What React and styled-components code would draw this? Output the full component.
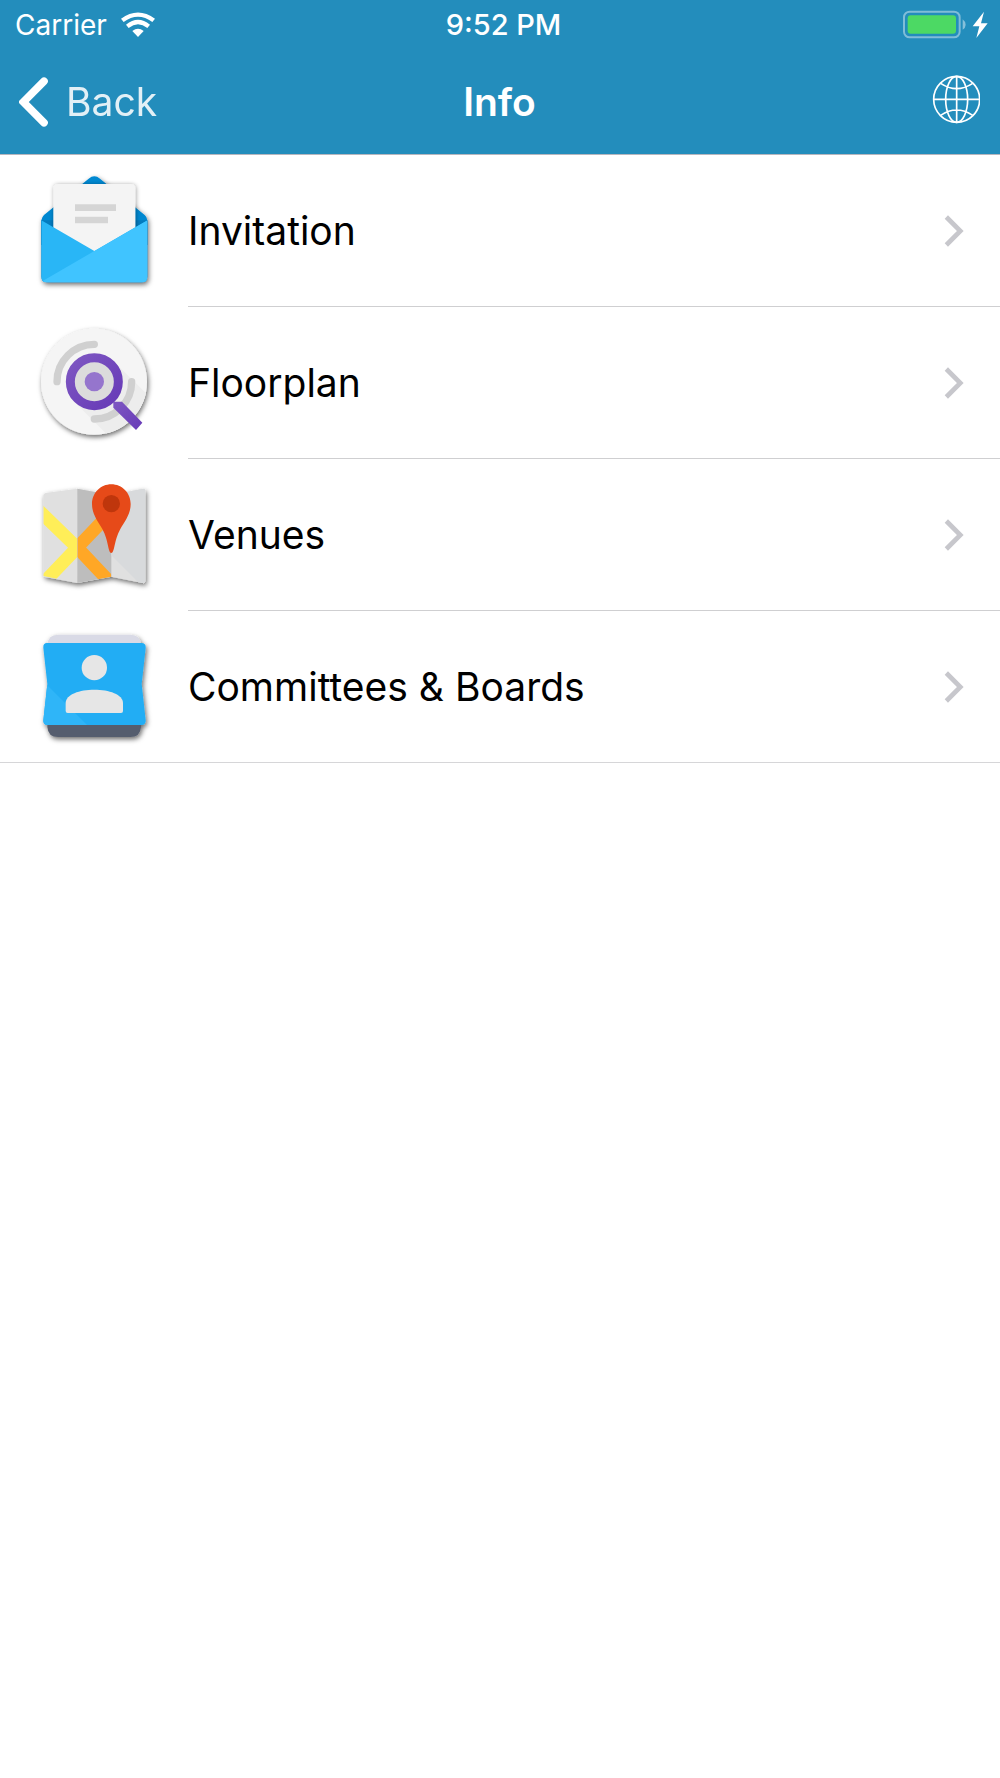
import React from "react";
import styled, { createGlobalStyle } from "styled-components";

const GlobalStyle = createGlobalStyle`
  *, *::before, *::after { box-sizing: border-box; }
  body {
    margin: 0;
    background: #fff;
    color: #000;
    font-family: Inter, "Liberation Sans", sans-serif;
  }
`;

const Header = styled.header`
  background: #238dbc;
  color: #fff;
  border-bottom: 1px solid #b6b6be;
`;

const ThreeColumns = styled.div`
  display: grid;
  grid-template-columns: 1fr auto 1fr;
  align-items: center;
`;

const StatusBar = styled(ThreeColumns)`
  height: 50px;
  padding: 0 8px 0 15px;
  font-size: 28px;
  line-height: 50px;
`;

const NavBar = styled(ThreeColumns)`
  height: 104px;
  padding: 0 20px 0 19px;
`;

const Side = styled.div`
  display: flex;
  align-items: center;
  justify-content: ${(p) => (p.$end ? "flex-end" : "flex-start")};
  gap: 14px;
`;

const Clock = styled.time`
  font-size: 29px;
  font-weight: 500;
`;

const Title = styled.h1`
  margin: 0;
  font-size: 39px;
  line-height: 48px;
  font-weight: 600;
`;

const BarButton = styled.button`
  display: flex;
  align-items: center;
  gap: 17px;
  margin: 0;
  padding: 0;
  border: 0;
  background: none;
  color: #fff;
  font: inherit;
  font-size: 39px;
  line-height: 48px;
  cursor: pointer;
`;

const BackText = styled.span`
  opacity: 0.87;
`;

const List = styled.ul`
  margin: 0;
  padding: 0;
  list-style: none;
  border-bottom: 1px solid #d6d6d8;
`;

const RowLink = styled.a`
  display: flex;
  align-items: flex-start;
  gap: 28px;
  padding-left: 30px;
  color: inherit;
  text-decoration: none;
`;

const RowBody = styled.span`
  display: flex;
  flex: 1;
  align-items: center;
  justify-content: space-between;
  height: ${(p) => (p.$last ? "151px" : "152px")};
  padding-right: 36px;
  border-bottom: ${(p) => (p.$last ? "0" : "1px solid #cfcfd1")};
`;

const RowLabel = styled.span`
  font-size: 39px;
  line-height: 48px;
`;

const RowIcon = styled.svg`
  flex: none;
  width: 130px;
  height: 130px;
  margin-top: 10px;
`;

const Wifi = () => (
  <svg width="34" height="26" viewBox="0 0 102 78" aria-hidden="true">
    <path d="M0 20Q51 -17 102 20L94 30Q51 -2 8 30Z" fill="#fff" />
    <path d="M15 38Q51 8 87 38L79 48Q51 26 23 48Z" fill="#fff" />
    <path d="M34 57Q51 43 68 57L51 75Z" fill="#fff" />
  </svg>
);

const Battery = () => (
  <svg width="89" height="30" viewBox="0 6 267 90" aria-label="Battery charging" role="img">
    <rect x="3" y="11" width="167" height="77" rx="17" fill="none" stroke="#fff" strokeOpacity=".42" strokeWidth="6" />
    <rect x="14" y="22" width="145" height="55" rx="9" fill="#4cd964" />
    <path d="M179 34q9 7 9 16t-9 15z" fill="#fff" fillOpacity=".45" />
    <path d="M243 11 L209 55 H229 L220 90 L254 46 H234Z" fill="#fff" />
  </svg>
);

const BackArrow = () => (
  <svg width="30" height="50" viewBox="0 0 90 150" aria-hidden="true">
    <path d="M75 13 L13 75 L75 137" fill="none" stroke="#fff" strokeWidth="23" strokeLinecap="round" />
  </svg>
);

const Globe = () => (
  <svg width="48" height="54" viewBox="-1 -1 144 162" aria-hidden="true">
    <g fill="none" stroke="#fff" strokeWidth="5">
      <circle cx="73" cy="72" r="69" />
      <ellipse cx="73" cy="72" rx="33" ry="69" />
      <path d="M73 3V141M4 72H142M25 24Q73 56 121 24M25 120Q73 88 121 120" />
    </g>
  </svg>
);

const Chevron = () => (
  <svg width="20" height="32" viewBox="-1 0 60 96" aria-hidden="true">
    <path d="M6 6 L48 48 L6 90" fill="none" stroke="#c7c7cc" strokeWidth="14" />
  </svg>
);

const Shadow = ({ id }) => (
  <filter id={id} x="-20%" y="-20%" width="140%" height="140%">
    <feDropShadow dx="4" dy="7" stdDeviation="8" floodColor="#000" floodOpacity=".58" />
  </filter>
);

const InvitationIcon = () => (
  <RowIcon viewBox="0 0 390 390" aria-hidden="true">
    <defs>
      <Shadow id="mailShadow" />
      <filter id="paperShadow" x="-15%" y="-15%" width="130%" height="130%">
        <feDropShadow dx="2" dy="2" stdDeviation="6" floodColor="#000" floodOpacity=".4" />
      </filter>
      <clipPath id="mailBody">
        <path d="M34 166 L193 258 L352 166V335Q352 352 335 352H51Q34 352 34 335Z" />
      </clipPath>
    </defs>
    <g filter="url(#mailShadow)">
      <path d="M34 335V166Q35 157 42 150L176 41Q193 27 210 41L344 150Q352 157 352 166V335Q352 352 335 352H51Q34 352 34 335Z" fill="#0288d1" />
    </g>
    <path d="M34 166H352V240H34Z" fill="#027bbf" />
    <path d="M70 270V71Q70 57 84 57H302Q316 57 316 71V270Z" fill="#f4f4f4" filter="url(#paperShadow)" />
    <path d="M135 118H258V138H135ZM135 155H234V175H135Z" fill="#d5d5d5" />
    <g clipPath="url(#mailBody)">
      <path d="M30 160H356V356H30Z" fill="#29b6f6" />
      <path d="M38 348 L193 258 L352 166V356H38Z" fill="#40c4ff" />
    </g>
  </RowIcon>
);

const FloorplanIcon = () => (
  <RowIcon viewBox="0 6 390 390" aria-hidden="true">
    <defs>
      <Shadow id="discShadow" />
      <clipPath id="disc"><circle cx="192" cy="200" r="160" /></clipPath>
      <linearGradient id="purple" x1="0" y1="0" x2="1" y2="1">
        <stop offset="0" stopColor="#7e57c2" />
        <stop offset="1" stopColor="#673ab7" />
      </linearGradient>
    </defs>
    <circle cx="192" cy="200" r="159" fill="#f5f5f5" filter="url(#discShadow)" />
    <g clipPath="url(#disc)">
      <path d="M133 260L253 140L390 277V397H270Z" fill="#ededed" />
      <g fill="none" stroke="#d0d0d0" strokeWidth="22" strokeLinecap="round">
        <path d="M81 200A112 112 0 0 1 193 88" />
        <path d="M305 200A112 112 0 0 1 193 312" />
      </g>
    </g>
    <path d="M250 260H276L337 323L318 345L250 278Z" fill="url(#purple)" />
    <circle cx="193" cy="200" r="72" fill="#dcdcdc" stroke="url(#purple)" strokeWidth="27" />
    <circle cx="193" cy="200" r="29" fill="#9575cd" />
  </RowIcon>
);

const VenuesIcon = () => (
  <RowIcon viewBox="0 -3 390 390" aria-hidden="true">
    <defs>
      <Shadow id="mapShadow" />
      <clipPath id="foldLeft"><path d="M40 71L142 56V339L40 318Z" /></clipPath>
      <clipPath id="foldMiddle"><path d="M142 56L244 75V320L142 339Z" /></clipPath>
    </defs>
    <path d="M40 76Q40 71 47 69L142 56L244 74L340 56Q346 56 346 61V333Q346 341 338 339L244 320L142 339L46 321Q40 320 40 314Z" fill="#e0e0e0" filter="url(#mapShadow)" />
    <path d="M142 56L244 75V320L142 339Z" fill="#bdbdbd" />
    <path d="M244 75L340 56Q346 56 346 61V333Q346 341 338 339L324 336L244 256Z" fill="#d8dadc" />
    <g fill="none" strokeWidth="39">
      <g clipPath="url(#foldLeft)" stroke="#ffee58">
        <path d="M20 115L154 245M20 360L154 220" />
      </g>
      <g clipPath="url(#foldMiddle)" stroke="#ffa726">
        <path d="M128 247L238 132M128 218L258 356" />
      </g>
    </g>
    <path d="M244 43C276 43 302 69 302 102C302 132 286 151 271 177C252 211 254 249 244 249C234 249 236 211 217 177C202 151 186 132 186 102C186 69 212 43 244 43Z" fill="#e64a19" />
    <circle cx="244" cy="101" r="26" fill="#bf360c" />
  </RowIcon>
);

const CommitteesIcon = () => (
  <RowIcon viewBox="0 3 390 390" aria-hidden="true">
    <defs>
      <Shadow id="contactShadow" />
      <clipPath id="card">
        <path d="M51 69H334Q348 69 347 83L335 192L347 301Q348 315 334 315H53Q39 315 40 301L52 192L40 83Q39 69 51 69Z" />
      </clipPath>
    </defs>
    <g filter="url(#contactShadow)">
      <path d="M52 75Q54 44 84 44H301Q331 44 333 75V315H52Z" fill="#d9dae6" />
      <path d="M52 310H333V321Q331 351 301 351H84Q54 351 52 321Z" fill="#555d6e" />
      <path d="M51 69H334Q348 69 347 83L335 192L347 301Q348 315 334 315H53Q39 315 40 301L52 192L40 83Q39 69 51 69Z" fill="#20adf4" />
    </g>
    <path clipPath="url(#card)" d="M30 174L176 320H30Z" fill="#2fb5f8" />
    <circle cx="193" cy="143" r="38" fill="#e6e6e6" />
    <path d="M107 249C107 223 149 209 193 209C237 209 279 223 279 249V273Q279 279 273 279H113Q107 279 107 273Z" fill="#e6e6e6" />
  </RowIcon>
);

const entries = [
  { label: "Invitation", href: "#invitation", Icon: InvitationIcon },
  { label: "Floorplan", href: "#floorplan", Icon: FloorplanIcon },
  { label: "Venues", href: "#venues", Icon: VenuesIcon },
  { label: "Committees & Boards", href: "#committees", Icon: CommitteesIcon },
];

export default function App() {
  return (
    <>
      <GlobalStyle />
      <Header>
        <StatusBar>
          <Side>
            <span>Carrier</span>
            <Wifi />
          </Side>
          <Clock>9:52 PM</Clock>
          <Side $end>
            <Battery />
          </Side>
        </StatusBar>
        <NavBar>
          <Side>
            <BarButton type="button">
              <BackArrow />
              <BackText>Back</BackText>
            </BarButton>
          </Side>
          <Title>Info</Title>
          <Side $end>
            <BarButton type="button" aria-label="Language">
              <Globe />
            </BarButton>
          </Side>
        </NavBar>
      </Header>
      <main>
        <List>
          {entries.map(({ label, href, Icon }, index) => (
            <li key={label}>
              <RowLink href={href}>
                <Icon />
                <RowBody $last={index === entries.length - 1}>
                  <RowLabel>{label}</RowLabel>
                  <Chevron />
                </RowBody>
              </RowLink>
            </li>
          ))}
        </List>
      </main>
    </>
  );
}
